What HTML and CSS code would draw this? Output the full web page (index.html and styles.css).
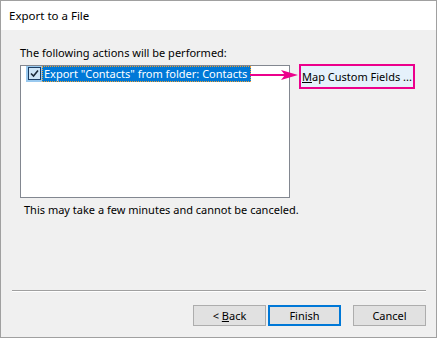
FILE: index.html
```html
<!DOCTYPE html>
<html lang="en">
<head>
    <meta charset="UTF-8">
    <title>Export to a File</title>
    <link rel="stylesheet" href="styles.css">
</head>
<body>
    <div class="dialog">
        <div class="title">Export to a File</div>

        <div class="body">
            <div class="label">The following actions will be performed:</div>

            <!-- Action list + map button -->
            <div class="actions">
                <div class="list">
                    <div class="item">
                        <span class="check">
                            <svg width="13" height="13" viewBox="0 0 13 13">
                                <rect x="0.5" y="0.5" width="12" height="12" fill="#cce4f7" stroke="#1c3d63"/>
                                <path d="M3 6.5 L5.5 9 L10 3.5" fill="none" stroke="#1b2a3a" stroke-width="1.6"/>
                            </svg>
                        </span>
                        <span class="item-text">Export "Contacts" from folder: Contacts</span>
                    </div>
                </div>
                <button class="map-btn"><u>M</u>ap Custom Fields ...</button>
                <svg class="arrow" width="49" height="12" viewBox="0 0 49 12">
                    <line x1="0" y1="5" x2="36" y2="5" stroke="#ec008c" stroke-width="2"/>
                    <path d="M31 0 L48 5 L31 10 L35 5 Z" fill="#ec008c"/>
                </svg>
            </div>

            <div class="note">This may take a few minutes and cannot be canceled.</div>
        </div>

        <div class="separator"></div>

        <div class="footer">
            <button class="btn">&lt; <u>B</u>ack</button>
            <button class="btn default">Finish</button>
            <button class="btn cancel">Cancel</button>
        </div>
    </div>
</body>
</html>
```

FILE: styles.css
```css
body {
    margin: 0;
    font-family: "Noto Sans", "Open Sans", sans-serif;
    font-size: 11px;
    color: #000;
}
.dialog {
    width: 437px;
    height: 338px;
    box-sizing: border-box;
    border: 1px solid #a0a0a0;
    background-color: #f0f0f0;
    display: flex;
    flex-direction: column;
}
.title {
    height: 29px;
    line-height: 29px;
    padding-left: 8px;
    font-size: 11.5px;
    background-color: #fff;
}
.body {
    height: 260px;
    box-sizing: border-box;
    padding: 15px 0 0 19px;
}
.label {
    line-height: 15px;
    margin-bottom: 5px;
}
.actions {
    position: relative;
    display: flex;
    align-items: flex-start;
}
.list {
    width: 270px;
    height: 133px;
    box-sizing: border-box;
    border: 1px solid #828790;
    background-color: #fff;
    padding: 0 0 0 5px;
}
.item {
    display: flex;
    height: 16px;
}
.check {
    width: 16px;
    height: 16px;
    box-sizing: border-box;
    padding: 1px 0 0 2px;
    background-color: #99c9ef;
}
.check svg {
    display: block;
}
.item-text {
    color: #fff;
    background-color: #0078d7;
    outline: 1px dotted #f0a030;
    outline-offset: -1px;
    line-height: 16px;
    padding: 0 4px 0 2px;
    white-space: nowrap;
}
.map-btn {
    margin: -1px 0 0 9px;
    width: 116px;
    height: 25px;
    box-sizing: border-box;
    border: 2px solid #ec008c;
    background-color: #e5f1fb;
    font: inherit;
    color: #000;
    text-align: left;
    white-space: nowrap;
    padding: 0 0 0 1px;
}
.arrow {
    position: absolute;
    left: 230px;
    top: 5px;
}
.note {
    margin: 4px 0 0 4px;
    line-height: 15px;
}
.separator {
    margin: 0 10px 0 11px;
    height: 1px;
    border-top: 1px solid #a0a0a0;
    background-color: #fff;
}
.footer {
    display: flex;
    justify-content: flex-end;
    padding: 13px 10px 0 0;
}
.btn {
    width: 73px;
    height: 21px;
    box-sizing: border-box;
    border: 1px solid #adadad;
    background-color: #e1e1e1;
    font: inherit;
    color: #000;
    padding: 0;
    margin-left: 2px;
}
.btn.default {
    border: 2px solid #0078d7;
}
.btn.cancel {
    margin-left: 12px;
}
```
